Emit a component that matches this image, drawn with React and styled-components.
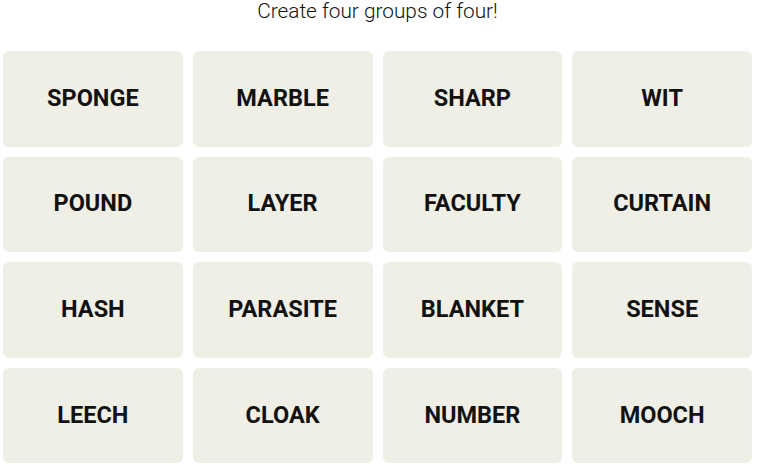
import * as React from "react"
import styled, { createGlobalStyle } from "styled-components"

const GlobalStyle = createGlobalStyle`
  body {
    margin: 0;
    background: #ffffff;
    font-family: "Roboto", "Liberation Sans", sans-serif;
  }
`

const Root = styled.main`
  width: 775px;
  height: 474px;
  overflow: hidden;
  padding: 0 3px;
  box-sizing: border-box;
`

const Prompt = styled.p`
  margin: 0;
  width: 749px;
  height: 51px;
  text-align: center;
  font-family: "Roboto", sans-serif;
  font-weight: 300;
  font-size: 20.8px;
  line-height: 22px;
  color: #121212;
`

const Board = styled.section`
  width: 749px;
  display: grid;
  grid-template-columns: repeat(4, 1fr);
  grid-auto-rows: 95.6px;
  gap: 10px;
`

const Tile = styled.button`
  border: none;
  border-radius: 6px;
  background: #efefe6;
  color: #121212;
  font-family: "Roboto", sans-serif;
  font-weight: 700;
  font-size: 23.5px;
  text-transform: uppercase;
  display: flex;
  align-items: center;
  justify-content: center;
  padding: 0 0 2px;
`

const words = [
  "Sponge", "Marble", "Sharp", "Wit",
  "Pound", "Layer", "Faculty", "Curtain",
  "Hash", "Parasite", "Blanket", "Sense",
  "Leech", "Cloak", "Number", "Mooch",
]

const App = () => (
  <Root>
    <GlobalStyle />
    <Prompt>Create four groups of four!</Prompt>
    <Board>
      {words.map(word => (
        <Tile key={word}>{word}</Tile>
      ))}
    </Board>
  </Root>
)

export default App
